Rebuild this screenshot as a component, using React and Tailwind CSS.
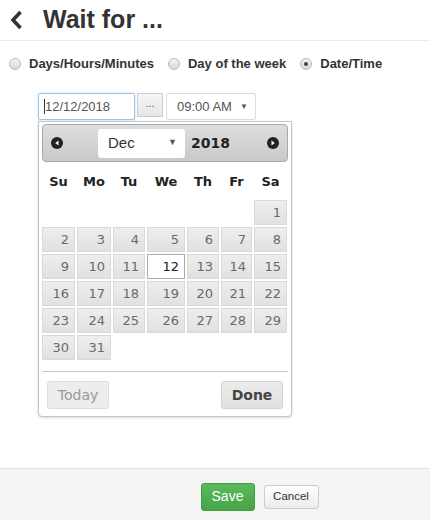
import { useState } from "react";

const COLS = "grid-cols-[33px_34px_32px_38px_32px_31px_33px]";
const DAYS = ["Su", "Mo", "Tu", "We", "Th", "Fr", "Sa"];

function Radio({ checked, label }) {
  return (
    <label className="flex items-center gap-[8px]">
      <span className="w-[12px] h-[12px] rounded-full border border-[#b9b9b9] bg-gradient-to-b from-[#f4f4f4] to-[#d8d8d8] flex items-center justify-center">
        {checked ? <span className="w-[4px] h-[4px] rounded-full bg-[#444]" /> : null}
      </span>
      <span className="text-[13px] font-bold text-[#333]">{label}</span>
    </label>
  );
}

function Arrow({ dir }) {
  return (
    <svg width="12" height="12" viewBox="0 0 12 12">
      <circle cx="6" cy="6" r="6" fill="#222" />
      {dir === "prev" ? <path d="M7.5 3.5 L4.2 6 L7.5 8.5 Z" fill="#fff" /> : <path d="M4.5 3.5 L7.8 6 L4.5 8.5 Z" fill="#fff" />}
    </svg>
  );
}

function Calendar() {
  const cells = [];
  for (let i = 0; i < 6; i++) cells.push(null);
  for (let d = 1; d <= 31; d++) cells.push(d);

  return (
    <div className="absolute left-0 top-[28px] w-[254px] bg-white border border-[#c5c5c5] rounded-b-[4px] shadow-[0_1px_3px_rgba(0,0,0,0.15)] px-[3px] pt-[2px] pb-[7px] font-['DejaVu_Sans',sans-serif]">
      <div className="h-[38px] rounded-[4px] border border-[#aaa] bg-gradient-to-b from-[#dedede] to-[#c9c9c9] flex items-center px-[8px]">
        <Arrow dir="prev" />
        <div className="ml-[35px] w-[87px] h-[29px] bg-white rounded-[3px] flex items-center justify-between pl-[10px] pr-[8px] font-['Liberation_Sans',Arial,sans-serif] text-[15px] text-[#333]">
          <span>Dec</span>
          <span className="text-[9px] text-[#555]">▼</span>
        </div>
        <span className="ml-[6px] text-[14px] font-bold text-[#222]">2018</span>
        <span className="ml-auto">
          <Arrow dir="next" />
        </span>
      </div>
      <div className={`grid ${COLS} gap-x-[2px] mt-[8px] h-[24px] items-center`}>
        {DAYS.map((d) => (
          <span key={d} className="text-center text-[13px] font-bold text-[#222]">{d}</span>
        ))}
      </div>
      <div className={`grid ${COLS} gap-x-[2px] gap-y-[2px] mt-[6px]`}>
        {cells.map((d, i) =>
          d === null ? (
            <span key={i} />
          ) : d === 12 ? (
            <span key={i} className="h-[25px] border border-[#aaa] bg-white text-right pr-[5px] text-[13px] leading-[23px] text-[#212121]">{d}</span>
          ) : (
            <span key={i} className="h-[25px] border border-[#d9d9d9] bg-gradient-to-b from-[#eeeeee] to-[#e1e1e1] text-right pr-[5px] text-[13px] leading-[23px] text-[#6a6a6a]">{d}</span>
          )
        )}
      </div>
      <div className="mt-[11px] border-t border-[#c8c8c8] pt-[9px] px-[5px] flex justify-between">
        <button className="w-[62px] h-[28px] rounded-[3px] border border-[#ddd] bg-[#ededed] text-[14px] text-[#999]">Today</button>
        <button className="w-[62px] h-[28px] rounded-[3px] border border-[#d3d3d3] bg-gradient-to-b from-[#ececec] to-[#e0e0e0] text-[14px] font-bold text-[#444]">Done</button>
      </div>
    </div>
  );
}

export default function App() {
  const [mode] = useState("date");
  return (
    <div className="w-[430px] h-[520px] flex flex-col bg-white font-['Liberation_Sans',Arial,sans-serif] text-[#333]">
      <div className="h-[41px] border-b border-[#ebebeb] flex items-center shrink-0">
        <svg className="ml-[10px]" width="13" height="20" viewBox="0 0 13 20">
          <path d="M10.5 2 L3 10 L10.5 18" fill="none" stroke="#333" strokeWidth="3.6" strokeLinejoin="miter" />
        </svg>
        <h1 className="ml-[20px] text-[25px] font-bold text-[#333] leading-none pb-[2px]">Wait for ...</h1>
      </div>
      <div className="flex-1">
        <div className="flex items-center h-[44px] pl-[9px] gap-[14px] pt-[2px]">
          <Radio checked={mode === "dhm"} label="Days/Hours/Minutes" />
          <Radio checked={mode === "dow"} label="Day of the week" />
          <Radio checked={mode === "date"} label="Date/Time" />
        </div>
        <div className="flex items-start pl-[38px] mt-[8px]">
          <div className="relative">
            <div className="w-[97px] h-[27px] border border-[#9ec3e6] rounded-[2px] flex items-center pl-[6px] text-[13px] text-[#555] shadow-[0_0_2px_rgba(102,175,233,0.5)]">
              <span className="w-px h-[15px] bg-[#333] -ml-[1px]" />
              12/12/2018
            </div>
            <Calendar />
          </div>
          <button className="ml-[2px] w-[26px] h-[24px] border border-[#ccc] bg-gradient-to-b from-[#f6f6f6] to-[#e6e6e6] text-[11px] text-[#555] leading-none pb-[4px]">...</button>
          <div className="ml-[3px] w-[90px] h-[27px] border border-[#ddd] rounded-[2px] flex items-center justify-between pl-[10px] pr-[7px] text-[13px] text-[#555]">
            <span>09:00 AM</span>
            <span className="text-[8px] text-[#555]">▼</span>
          </div>
        </div>
      </div>
      <div className="h-[52px] shrink-0 bg-[#f5f5f5] border-t border-[#e3e3e3] flex items-center justify-center gap-[9px] pl-[89px] pt-[4px]">
        <button className="w-[54px] h-[28px] rounded-[3px] bg-gradient-to-b from-[#5cb85c] to-[#47a447] border border-[#449d44] text-white text-[14px]">Save</button>
        <button className="w-[55px] h-[24px] rounded-[3px] bg-gradient-to-b from-white to-[#ebebeb] border border-[#ccc] text-[#333] text-[11.5px]">Cancel</button>
      </div>
    </div>
  );
}
